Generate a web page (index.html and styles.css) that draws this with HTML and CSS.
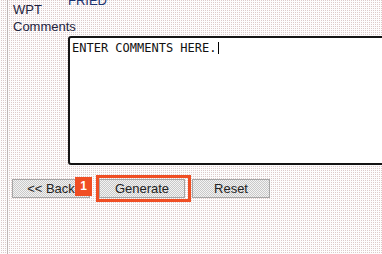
FILE: index.html
```html
<!DOCTYPE html>
<html lang="en">
<head>
    <meta charset="UTF-8">
    <title>WPT Comments</title>
    <link rel="stylesheet" href="styles.css">
</head>
<body>
    <div class="page">
        <div class="form-grid">
            <div class="field-label">WPT<br>Comments</div>
            <div class="field-value">
                <div class="prev-value">FRIED</div>
                <div class="comments-box">ENTER COMMENTS HERE.<span class="caret"></span></div>
            </div>
        </div>

        <div class="button-row">
            <button class="form-button back-button">&lt;&lt; Back</button>
            <span class="highlight">
                <span class="step-badge">1</span>
                <button class="form-button generate-button">Generate</button>
            </span>
            <button class="form-button reset-button">Reset</button>
        </div>
    </div>
</body>
</html>
```

FILE: styles.css
```css
html, body {
    margin: 0;
    height: 100%;
}
body {
    font-family: "Liberation Sans", Arial, sans-serif;
    font-size: 13px;
    color: #1e2440;
    background: repeating-conic-gradient(#dccaca 0 25%, #fdfcfc 0 100%) 0 0 / 2px 2px;
    overflow: hidden;
}
.page {
    margin-left: 7px;
    border-left: 1px solid #bfb6b6;
    min-height: 254px;
    padding: 1px 0 0 4px;
    box-sizing: border-box;
}
.form-grid {
    display: grid;
    grid-template-columns: 56px auto;
    align-items: start;
}
.field-label {
    padding-left: 1px;
    line-height: 17px;
}
.prev-value {
    margin-top: -9px;
    line-height: 17px;
    color: #1b3270;
}
.comments-box {
    margin-top: 27px;
    width: 326px;
    height: 122px;
    padding: 3px 2px 0;
    box-sizing: content-box;
    border: 2px solid #141414;
    border-radius: 3px;
    background: #fff;
    font-family: "DejaVu Sans Mono", "Liberation Mono", monospace;
    font-size: 12px;
    line-height: 14px;
    color: #111;
    white-space: pre;
}
.caret {
    display: inline-block;
    width: 1px;
    height: 12px;
    margin-left: 1px;
    background: #000;
    vertical-align: -2px;
}
.button-row {
    display: flex;
    align-items: center;
    margin-top: 10px;
}
.form-button {
    height: 19px;
    padding: 0;
    border: 1px solid #a6a6a6;
    background: repeating-conic-gradient(#c9c9c9 0 25%, #f3f3f3 0 50%) 0 0 / 2px 2px;
    font-family: "Liberation Sans", Arial, sans-serif;
    font-size: 13px;
    line-height: 17px;
    color: #222;
}
.back-button {
    width: 78px;
}
.generate-button {
    width: 86px;
}
.reset-button {
    width: 78px;
    margin-left: 1px;
}
.highlight {
    position: relative;
    display: flex;
    margin-left: 6px;
    padding: 1px 3px 1px 0;
    border: 3px solid #f04e23;
}
.step-badge {
    position: absolute;
    left: -24px;
    top: -1px;
    width: 17px;
    height: 19px;
    background: #f04e23;
    color: #fff;
    font-weight: bold;
    font-size: 12px;
    line-height: 19px;
    text-align: center;
}
```
